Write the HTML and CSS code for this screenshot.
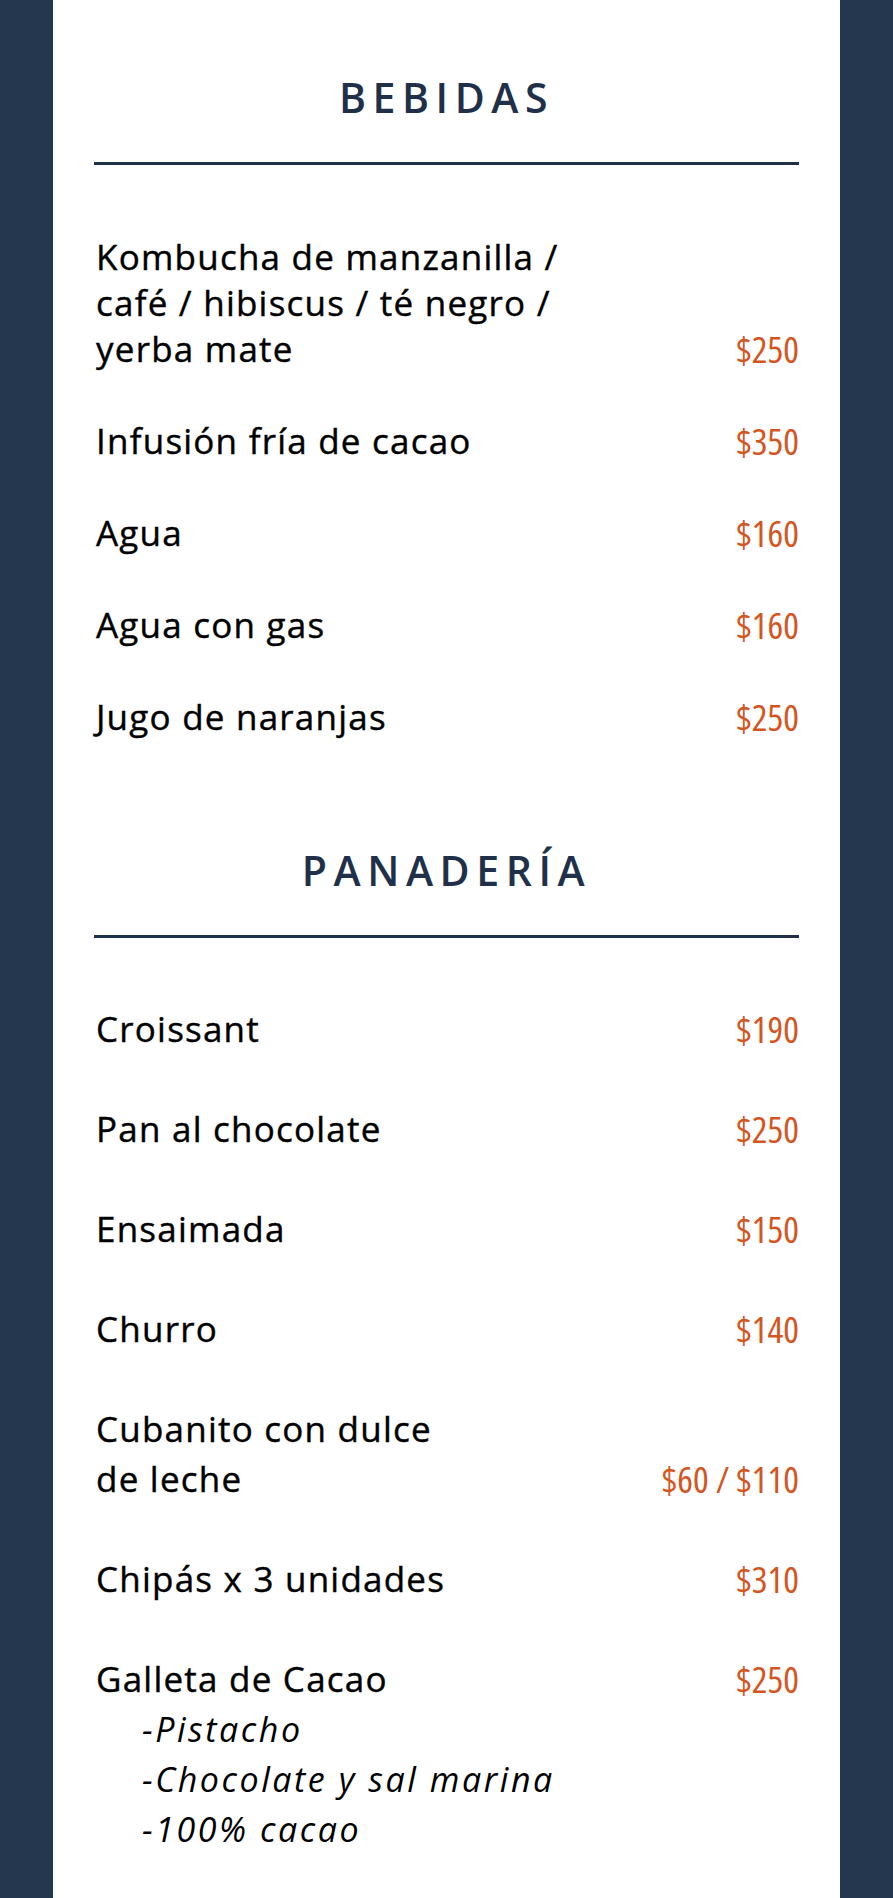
FILE: index.html
```html
<!DOCTYPE html>
<html lang="es">
<head>
  <meta charset="UTF-8">
  <meta name="viewport" content="width=device-width, initial-scale=1">
  <title>Menú</title>
  <link rel="stylesheet" href="styles.css">
</head>
<body>

  <main class="menu">

    <section class="category">
      <h2>BEBIDAS</h2>
      <hr class="divider">
      <ul class="items">
        <li class="item">
          <span class="name">Kombucha de manzanilla /<br>café / hibiscus / té negro /<br>yerba mate</span>
          <span class="price">$250</span>
        </li>
        <li class="item">
          <span class="name">Infusión fría de cacao</span>
          <span class="price">$350</span>
        </li>
        <li class="item">
          <span class="name">Agua</span>
          <span class="price">$160</span>
        </li>
        <li class="item">
          <span class="name">Agua con gas</span>
          <span class="price">$160</span>
        </li>
        <li class="item">
          <span class="name">Jugo de naranjas</span>
          <span class="price">$250</span>
        </li>
      </ul>
    </section>

    <section class="category bakery">
      <h2>PANADERÍA</h2>
      <hr class="divider">
      <ul class="items">
        <li class="item">
          <span class="name">Croissant</span>
          <span class="price">$190</span>
        </li>
        <li class="item">
          <span class="name">Pan al chocolate</span>
          <span class="price">$250</span>
        </li>
        <li class="item">
          <span class="name">Ensaimada</span>
          <span class="price">$150</span>
        </li>
        <li class="item">
          <span class="name">Churro</span>
          <span class="price">$140</span>
        </li>
        <li class="item">
          <span class="name">Cubanito con dulce<br>de leche</span>
          <span class="price">$60 / $110</span>
        </li>
        <li class="item">
          <span class="name">Chipás x 3 unidades</span>
          <span class="price">$310</span>
        </li>
        <li class="item top">
          <div class="name">
            Galleta de Cacao
            <ul class="flavors">
              <li>-Pistacho</li>
              <li>-Chocolate y sal marina</li>
              <li>-100% cacao</li>
            </ul>
          </div>
          <span class="price">$250</span>
        </li>
      </ul>
    </section>

  </main>

</body>
</html>
```

FILE: styles.css
```css
:root {
  --navy: #25364f;
  --ink: #213049;
  --orange: #d4561f;
}
* { margin: 0; padding: 0; box-sizing: border-box; }
body {
  background: var(--navy);
  font-family: 'Open Sans', 'Noto Sans', sans-serif;
  color: #000;
}
.menu {
  width: 787px; margin: 0 auto; background: #fff;
  padding: 72px 41px 80px;
}
.category h2 {
  font-family: 'Open Sans', sans-serif;
  font-size: 41px; font-weight: 600; line-height: 50px;
  letter-spacing: 0.16em; text-align: center; color: var(--ink);
  margin-bottom: 40px;
}
.divider { border: none; height: 3px; background: var(--ink); }

.items { list-style: none; margin-top: 69px; display: flex; flex-direction: column; gap: 46px; }
.item {
  display: flex; justify-content: space-between; align-items: flex-end;
  font-size: 35px; line-height: 46px;
  letter-spacing: 0.035em;
}
.item .name { padding-left: 2px; -webkit-text-stroke: 0.4px #000; }
.price {
  font-family: 'Open Sans', sans-serif; font-stretch: 75%;
  color: var(--orange); font-size: 37px; font-weight: 500;
  letter-spacing: 0; white-space: nowrap;
}

.bakery { margin-top: 105px; }
.bakery .items { margin-top: 66px; gap: 50px; }
.bakery .item { line-height: 50px; }
.item.top { align-items: flex-start; }
.flavors {
  list-style: none; font-style: italic; font-size: 34px;
  letter-spacing: 0.075em; padding-left: 46px;
  -webkit-text-stroke: 0;
}
```
